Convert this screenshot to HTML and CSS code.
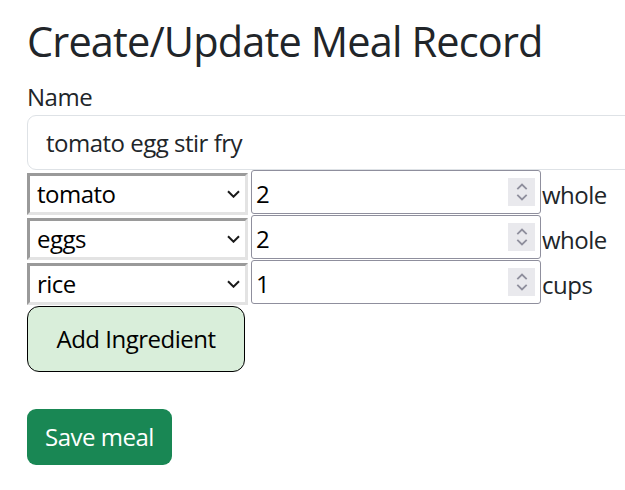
FILE: index.html
```html
<!DOCTYPE html>
<html lang="en">
<head>
<meta charset="utf-8">
<title>Create/Update Meal Record</title>
<link rel="stylesheet" href="styles.css">
</head>
<body>
<main class="page">
  <h1 class="title">Create/Update Meal Record</h1>
  <form class="meal-form">
    <label class="field-label" for="name">Name</label>
    <input class="name-input" id="name" type="text" value="tomato egg stir fry">

    <div class="ing-row">
      <div class="select-box">
        <select class="select-native"><option>tomato</option></select>
        <svg class="chev" width="13" height="8" viewBox="0 0 13 8"><path d="M1 1.2 L6.5 6.7 L12 1.2" fill="none" stroke="#1a1a1a" stroke-width="2"/></svg>
      </div>
      <div class="num-box">
        <input class="num-native" type="text" value="2">
        <span class="spin"><svg width="14" height="22" viewBox="0 0 14 22"><path d="M2.3 8.2 L7 3.5 L11.7 8.2" fill="none" stroke="#8f8f9d" stroke-width="1.8"/><path d="M2.3 13.8 L7 18.5 L11.7 13.8" fill="none" stroke="#8f8f9d" stroke-width="1.8"/></svg></span>
      </div>
      <span class="unit">whole</span>
    </div>

    <div class="ing-row">
      <div class="select-box">
        <select class="select-native"><option>eggs</option></select>
        <svg class="chev" width="13" height="8" viewBox="0 0 13 8"><path d="M1 1.2 L6.5 6.7 L12 1.2" fill="none" stroke="#1a1a1a" stroke-width="2"/></svg>
      </div>
      <div class="num-box">
        <input class="num-native" type="text" value="2">
        <span class="spin"><svg width="14" height="22" viewBox="0 0 14 22"><path d="M2.3 8.2 L7 3.5 L11.7 8.2" fill="none" stroke="#8f8f9d" stroke-width="1.8"/><path d="M2.3 13.8 L7 18.5 L11.7 13.8" fill="none" stroke="#8f8f9d" stroke-width="1.8"/></svg></span>
      </div>
      <span class="unit">whole</span>
    </div>

    <div class="ing-row">
      <div class="select-box">
        <select class="select-native"><option>rice</option></select>
        <svg class="chev" width="13" height="8" viewBox="0 0 13 8"><path d="M1 1.2 L6.5 6.7 L12 1.2" fill="none" stroke="#1a1a1a" stroke-width="2"/></svg>
      </div>
      <div class="num-box">
        <input class="num-native" type="text" value="1">
        <span class="spin"><svg width="14" height="22" viewBox="0 0 14 22"><path d="M2.3 8.2 L7 3.5 L11.7 8.2" fill="none" stroke="#8f8f9d" stroke-width="1.8"/><path d="M2.3 13.8 L7 18.5 L11.7 13.8" fill="none" stroke="#8f8f9d" stroke-width="1.8"/></svg></span>
      </div>
      <span class="unit">cups</span>
    </div>

    <button class="add-btn" type="button">Add Ingredient</button>
    <button class="save-btn" type="submit">Save meal</button>
  </form>
</main>
</body>
</html>
```

FILE: styles.css
```css
* { box-sizing: border-box; }

html, body {
  margin: 0;
  background: #ffffff;
}

body {
  font-family: "Open Sans", "Noto Sans", sans-serif;
  font-size: 24px;
  line-height: 1.5;
  letter-spacing: -0.5px;
  color: #212529;
  overflow: hidden;
}

.page {
  padding: 17px 0 0 27px;
  width: 625px;
  overflow: hidden;
}

.title {
  margin: 0 0 12px;
  font-size: 41.5px;
  font-weight: 400;
  line-height: 1.2;
  letter-spacing: -0.85px;
}

.meal-form {
  display: flex;
  flex-direction: column;
  align-items: flex-start;
}

.field-label {
  display: block;
  margin-bottom: 0;
  line-height: 36px;
}

.name-input {
  width: 650px;
  flex: none;
  height: 55px;
  border: 1.5px solid #dee2e6;
  border-radius: 9px;
  padding: 0 18px;
  font: inherit;
  letter-spacing: inherit;
  color: #212529;
  background: #fff;
  outline: none;
}

.ing-row {
  display: flex;
  align-items: flex-start;
  height: 45px;
}

.select-box {
  display: flex;
  align-items: center;
  width: 221px;
  height: 42px;
  margin-top: 3px;
  border: 3px solid;
  border-color: #9a9a9a #e3e3e3 #e3e3e3 #9a9a9a;
  background: #fff;
  padding: 0 5px 0 7px;
}

.select-native {
  flex: 1;
  min-width: 0;
  appearance: none;
  -webkit-appearance: none;
  border: 0;
  padding: 0;
  margin: 0;
  background: transparent;
  font: inherit;
  letter-spacing: inherit;
  color: #000;
  outline: none;
}

.chev { flex: none; }

.num-box {
  display: flex;
  align-items: center;
  width: 290px;
  height: 44px;
  margin-left: 3px;
  border: 1.5px solid #8f8f9d;
  border-radius: 3px;
  background: #fff;
  padding: 0 5px 0 4px;
}

.num-native {
  flex: 1;
  min-width: 0;
  border: 0;
  padding: 5px 0 0;
  margin: 0;
  font: inherit;
  letter-spacing: inherit;
  color: #000;
  background: transparent;
  outline: none;
}

.spin {
  flex: none;
  display: flex;
  align-items: center;
  justify-content: center;
  width: 27px;
  height: 28px;
  background: #e9e9ed;
}

.unit {
  margin-left: 1px;
  line-height: 49px;
}

.add-btn {
  margin-top: 1px;
  width: 218px;
  height: 66px;
  border: 1.5px solid #000;
  border-radius: 12px;
  background: #d9eeda;
  font: inherit;
  letter-spacing: inherit;
  color: #000;
  padding: 0;
}

.save-btn {
  margin-top: 37px;
  width: 145px;
  height: 56px;
  border: 0;
  border-radius: 9px;
  background: #198754;
  color: #fff;
  font: inherit;
  letter-spacing: inherit;
  padding: 0;
}
```
